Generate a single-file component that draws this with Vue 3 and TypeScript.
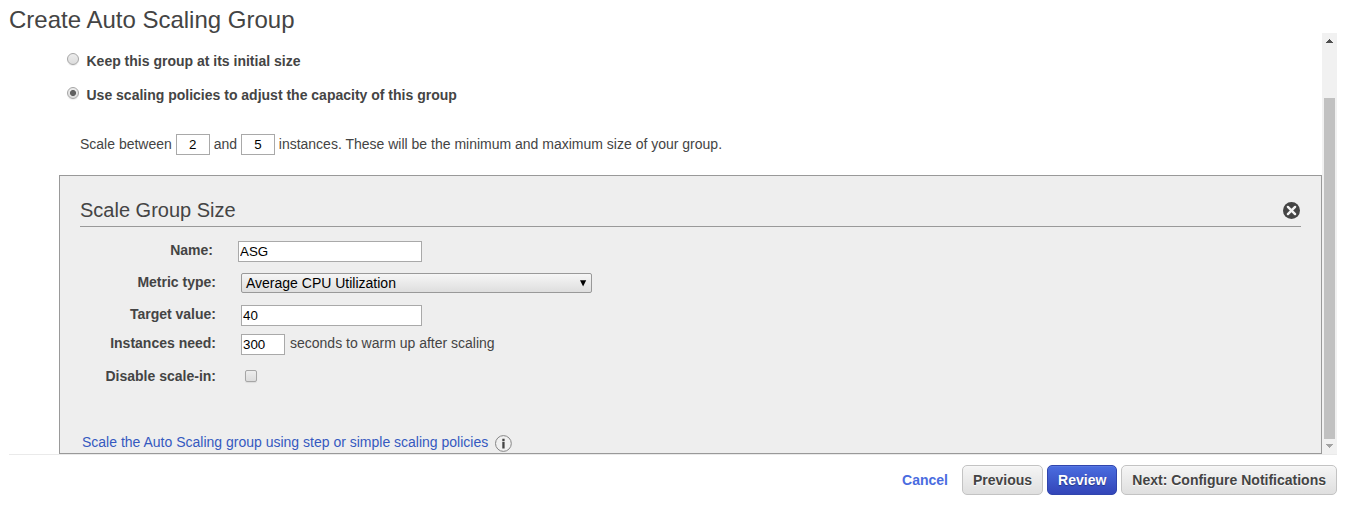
<script setup lang="ts">
import { ref } from 'vue'

const mode = ref<'keep' | 'policies'>('policies')
const minSize = ref('2')
const maxSize = ref('5')
const policyName = ref('ASG')
const targetValue = ref('40')
const warmup = ref('300')
const disableScaleIn = ref(false)
</script>

<template>
  <main class="wizard">
    <h1>Create Auto Scaling Group</h1>
    <section class="scroller">
      <div class="content">
        <label class="option first">
          <input v-model="mode" type="radio" value="keep" />
          <span>Keep this group at its initial size</span>
        </label>
        <label class="option">
          <input v-model="mode" type="radio" value="policies" />
          <span>Use scaling policies to adjust the capacity of this group</span>
        </label>
        <div class="between">
          <span>Scale between</span>
          <input v-model="minSize" class="field count" type="text" />
          <span>and</span>
          <input v-model="maxSize" class="field count" type="text" />
          <span>instances. These will be the minimum and maximum size of your group.</span>
        </div>
        <div class="panel">
          <header class="panel-head">
            <h2>Scale Group Size</h2>
            <svg class="close" width="18" height="18" viewBox="0 0 18 18">
              <circle cx="9.5" cy="9.5" r="8.5" fill="#444" />
              <path d="M5.9 5.9L13.1 13.1M13.1 5.9L5.9 13.1" stroke="#f4f4f4" stroke-width="2.4" stroke-linecap="round" />
            </svg>
          </header>
          <div class="row name">
            <label>Name:</label>
            <input v-model="policyName" class="field wide" type="text" />
          </div>
          <div class="row metric">
            <label>Metric type:</label>
            <div class="select">
              <span>Average CPU Utilization</span>
              <svg width="7" height="7" viewBox="0 0 7 7"><path d="M0 0.3H6.2L3.1 6.4Z" fill="#000" /></svg>
            </div>
          </div>
          <div class="row target">
            <label>Target value:</label>
            <input v-model="targetValue" class="field medium" type="text" />
          </div>
          <div class="row warm">
            <label>Instances need:</label>
            <input v-model="warmup" class="field small" type="text" />
            <span class="after">seconds to warm up after scaling</span>
          </div>
          <div class="row disable">
            <label>Disable scale-in:</label>
            <input v-model="disableScaleIn" type="checkbox" />
          </div>
          <div class="switch">
            <a>Scale the Auto Scaling group using step or simple scaling policies</a>
            <svg width="18" height="18" viewBox="0 0 18 18">
              <circle cx="9.4" cy="9.5" r="7.9" fill="#f0f0f0" stroke="#858585" stroke-width="1" />
              <path d="M8.3 4.8h2.3v2.1h-2.3zM8.3 7.8h2.3v6.8h-2.3z" fill="#444" />
            </svg>
          </div>
        </div>
      </div>
      <div class="scrollbar">
        <svg class="up" width="7" height="4" viewBox="0 0 7 4"><path d="M3 0h1v1h1v1h1v1h1v1H0V3h1V2h1V1h1z" fill="#505050" /></svg>
        <div class="thumb"></div>
        <svg class="down" width="7" height="4" viewBox="0 0 7 4"><path d="M0 0h7v1H6v1H5v1H4v1H3V3H2V2H1V1H0z" fill="#a3a3a3" /></svg>
      </div>
    </section>
    <footer>
      <a class="cancel">Cancel</a>
      <button type="button">Previous</button>
      <button type="button" class="primary">Review</button>
      <button type="button">Next: Configure Notifications</button>
    </footer>
  </main>
</template>

<style>
body {
  background: #fff;
}
</style>

<style scoped>
* {
  box-sizing: border-box;
}
.wizard {
  height: 511px;
  padding: 5px 11px 0 9px;
  overflow: hidden;
  font: 14px/20px "Liberation Sans", Arial, sans-serif;
  color: #444;
}
h1,
h2 {
  margin: 0;
  font-weight: normal;
}
h1 {
  height: 28px;
  font-size: 24px;
  line-height: 30px;
}
.scroller {
  display: flex;
  height: 422px;
  border-bottom: 1px solid #eaeaea;
}
.content {
  flex: 1;
  padding-left: 50px;
  min-width: 0;
}
input {
  margin: 0;
  flex: none;
}
.option {
  display: flex;
  padding-left: 8px;
  margin-top: 14px;
  font-weight: bold;
}
.option.first {
  margin-top: 18px;
}
.option input,
.disable input {
  appearance: none;
  width: 12px;
  height: 12px;
  margin: 2px 7.5px 0 0;
  border: 1px solid #a6a6a6;
  border-radius: 50%;
  background: linear-gradient(#ededed, #dcdcdc);
  box-shadow: 0 1px 1px rgba(0, 0, 0, 0.08);
}
.option input:checked {
  background: radial-gradient(circle, #606060 0 2.7px, transparent 3.3px), linear-gradient(#ededed, #dcdcdc);
}
.between {
  display: flex;
  gap: 3.9px;
  height: 21px;
  margin-top: 29px;
  padding-left: 21px;
  white-space: nowrap;
}
.field {
  height: 21px;
  padding: 1px;
  border: 1px solid #a9a9a9;
  border-radius: 0;
  outline: 0;
  background: #fff;
  color: #000;
  font: 13.333px "Liberation Sans", Arial, sans-serif;
}
.count {
  width: 34px;
  text-align: center;
}
.panel {
  height: 279px;
  margin-top: 20px;
  padding: 22px 20px 0;
  border: 1px solid #999;
  background: #eee;
}
.panel-head {
  display: flex;
  justify-content: space-between;
  height: 29px;
  border-bottom: 1px solid #999;
}
h2 {
  font-size: 20px;
  line-height: 24px;
}
.close {
  margin: 3px 1px 0 0;
}
.row {
  display: flex;
  align-items: flex-start;
  height: 20px;
}
.row label {
  width: 136px;
  margin-right: 25px;
  text-align: right;
  font-weight: bold;
}
.name {
  margin-top: 13px;
}
.row.name label {
  width: 133px;
}
.name .field,
.target .field,
.warm .field,
.select {
  margin-top: 1px;
}
.metric,
.target {
  margin-top: 12px;
}
.warm {
  margin-top: 9px;
}
.disable {
  margin-top: 13px;
}
.wide {
  width: 184px;
}
.medium {
  width: 181px;
}
.small {
  width: 44px;
}
.after {
  margin-left: 5px;
}
.select {
  display: flex;
  align-items: center;
  justify-content: space-between;
  width: 351px;
  height: 20px;
  padding: 0 4px;
  border: 1px solid #999;
  border-radius: 2px;
  background: linear-gradient(#f6f6f6, #dedede);
  color: #000;
}
.row.disable input {
  margin: 4px 0 0 4px;
  border-radius: 2px;
}
.switch {
  display: flex;
  margin-top: 46px;
  padding-left: 2px;
  color: #3559c0;
}
.switch svg {
  margin: 2px 0 0 6px;
}
.scrollbar {
  display: flex;
  flex-direction: column;
  align-items: center;
  width: 15px;
  background: #f1f1f1;
}
.scrollbar svg {
  flex: none;
}
.up {
  margin-top: 6px;
}
.thumb {
  width: 11px;
  height: 341px;
  margin: 55px 0 5px;
  background: #c1c1c1;
}
footer {
  display: flex;
  justify-content: flex-end;
  gap: 4px;
  padding-top: 10px;
}
.cancel {
  margin-right: 10px;
  color: #4a6ce0;
  font-weight: bold;
  line-height: 30px;
}
button {
  height: 30px;
  padding: 0 10px;
  border: 1px solid #c3c3c3;
  border-radius: 5px;
  background: linear-gradient(#f5f5f5, #dfdfdf);
  box-shadow: inset 0 1px 0 rgba(255, 255, 255, 0.25);
  color: #444;
  font: bold 14px/20px "Liberation Sans", Arial, sans-serif;
  text-shadow: 0 1px 1px #fff;
}
.primary {
  border-color: #3045ad;
  background: linear-gradient(#4a6de0, #3345b8);
  box-shadow: inset 0 1px 0 rgba(255, 255, 255, 0.08);
  color: #fff;
  text-shadow: 0 1px 1px rgba(0, 0, 0, 0.35);
}
</style>
